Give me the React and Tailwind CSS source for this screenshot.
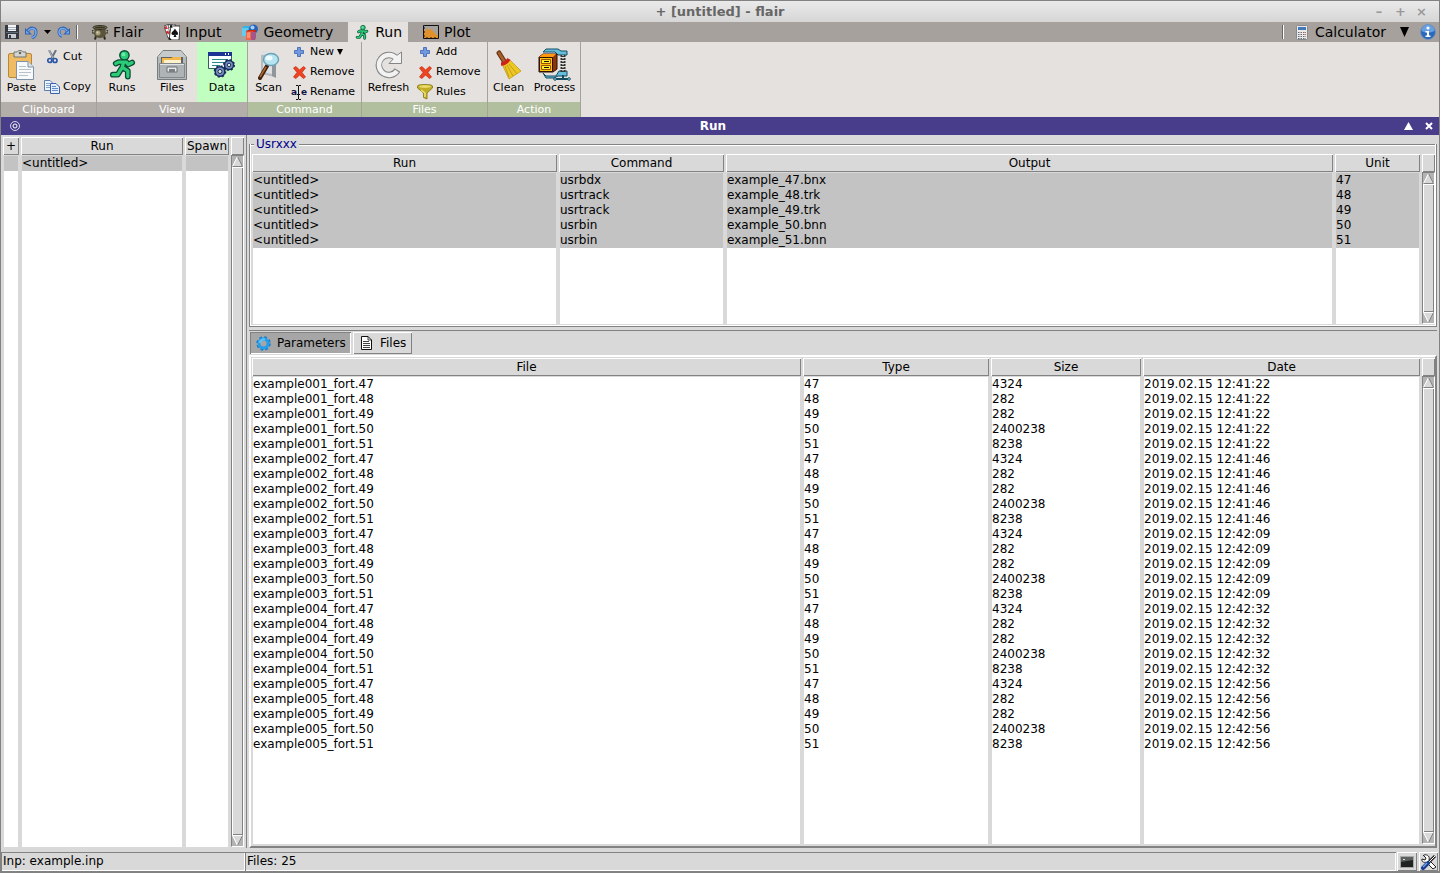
import clsx from 'clsx'

const RUNS = ['<untitled>']

const OUTPUTS = [
  ['<untitled>', 'usrbdx', 'example_47.bnx', '47'],
  ['<untitled>', 'usrtrack', 'example_48.trk', '48'],
  ['<untitled>', 'usrtrack', 'example_49.trk', '49'],
  ['<untitled>', 'usrbin', 'example_50.bnn', '50'],
  ['<untitled>', 'usrbin', 'example_51.bnn', '51'],
]

const CYCLES = ['12:41:22', '12:41:46', '12:42:09', '12:42:32', '12:42:56']
const UNITS = [['47', '4324'], ['48', '282'], ['49', '282'], ['50', '2400238'], ['51', '8238']]
const FILES = CYCLES.flatMap((time, i) =>
  UNITS.map(([unit, size]) => [`example00${i + 1}_fort.${unit}`, unit, size, `2019.02.15 ${time}`])
)

const RAISED = 'shadow-[inset_1px_1px_0_#fff,inset_-1px_-1px_0_#828282]'
const SUNKEN = 'shadow-[inset_1px_1px_0_#828282,inset_-1px_-1px_0_#fff]'

/* ---------- icons ---------- */

function Svg({ w, h, children }) {
  return (
    <svg width={w} height={h} viewBox={`0 0 ${w} ${h}`} fill="none" className="block shrink-0" aria-hidden="true">
      {children}
    </svg>
  )
}

const SaveIcon = () => (
  <Svg w={14} h={14}>
    <path d="M0 0H14V14H0Z" fill="#343b43" />
    <path d="M3 0H11V6H3Z" fill="#f2f4f6" />
    <path d="M3 2.500H11M3 4.500H11" stroke="#a9b2ba" />
    <path d="M1 7H13V8H1Z" fill="#5e6a75" />
    <path d="M3 9H11V13H3Z" fill="#c9ced2" />
    <path d="M4 10H6V13H4Z" fill="#343b43" />
  </Svg>
)

const UndoIcon = () => (
  <Svg w={13} h={14}>
    <path d="M3 6C5 2 11 2 11 7C11 10 9 12 7 13" stroke="#2f62b5" strokeWidth="3" />
    <path d="M0 3V9.500H7Z" fill="#2f62b5" />
    <path d="M3 6C5 2.500 10.500 2.500 11 7C11 10 9 12 7 12.500" stroke="#78a8ec" strokeWidth="1.500" />
    <path d="M1 5.500V8.600H4.500Z" fill="#78a8ec" />
  </Svg>
)

const RedoIcon = () => (
  <Svg w={13} h={14}>
    <path d="M10 6C8 2 2 2 2 7C2 10 4 11 5 11" stroke="#2f62b5" strokeWidth="3" />
    <path d="M13 3V9.500H6Z" fill="#2f62b5" />
    <path d="M10 6C8 2.500 2.500 2.500 2 7C2 9.500 3.500 10.500 5 11" stroke="#78a8ec" strokeWidth="1.500" />
    <path d="M12 5.500V8.600H8.500Z" fill="#78a8ec" />
  </Svg>
)

const CauldronIcon = () => (
  <Svg w={16} h={15}>
    <path d="M4 11L3 14.500M12 11L13 14.500" stroke="#29261b" strokeWidth="2" />
    <path d="M2 3H14L13.500 6C15 9 13.500 13 8 13C2.500 13 1 9 2.500 6Z" fill="#5a543b" />
    <path d="M1.500 5.500H0V8H2M14.500 5.500H16V8H14" stroke="#35311f" />
    <ellipse cx="8" cy="2.500" rx="7" ry="2" fill="#7a745a" stroke="#35311f" />
    <ellipse cx="8" cy="2.500" rx="5" ry=".9" fill="#3a3626" />
    <ellipse cx="6" cy="8" rx="2.500" ry="2.500" fill="#a39c7a" />
    <circle cx="5.500" cy="7.500" r="1" fill="#d8d2b4" />
  </Svg>
)

const CardsIcon = () => (
  <Svg w={16} h={16}>
    <path d="M0 2L5 0L8 13L4 14Z" fill="#fff" stroke="#222" strokeWidth=".7" />
    <path d="M4 1L11 0L12 14L7 15Z" fill="#fff" stroke="#222" strokeWidth=".7" />
    <path d="M7 2H16L15 16H5Z" fill="#fff" stroke="#111" strokeWidth=".8" />
    <path d="M1 5L2 2L3.500 5M2 8L4 7L5 10L3 9Z" stroke="#e01818" fill="#e01818" strokeWidth=".7" />
    <path d="M6 4L7 1L8 4" stroke="#111" />
    <path d="M11 4.500C12 7 14.500 8 14 10C13.500 11.500 12 11 11.500 10.500L12.500 13H9.500L10.500 10.500C9.500 11.500 7.500 11 7.500 9.500C7.500 7.500 10 7 11 4.500Z" fill="#111" />
    <path d="M5 14L7 16" stroke="#111" strokeWidth="1.500" />
  </Svg>
)

const GeometryIcon = () => (
  <Svg w={16} h={16}>
    <path d="M0 4L2 2H9V10L7 12H0Z" fill="#33b4e4" />
    <path d="M0 4H6V12H0Z" fill="#62cbf0" />
    <circle cx="11.500" cy="5" r="4.500" fill="#2862b8" />
    <circle cx="10.500" cy="3.600" r="2" fill="#a6cdf7" />
    <path d="M4 7L6 6H14L13 16H4Z" fill="#c82817" />
    <path d="M4 7.500H11.500V16H4Z" fill="#f26648" />
    <path d="M9 8H14V14L12 16H9Z" fill="#a35687" />
    <path d="M5 9L8 8V14H5Z" fill="#ff9171" />
  </Svg>
)

function RunnerIcon({ w, h }) {
  const body = 'M7 14L10 12.500H18L20 15L24 13M15 13L13.500 19M14 18L19.500 21.500L19.500 27.500M13 19L9 25.500H4'
  return (
    <svg width={w} height={h} viewBox="0 0 28 31" fill="none" className="block shrink-0" aria-hidden="true">
      <path d={body} stroke="#0a4b33" strokeWidth="6" strokeLinecap="round" strokeLinejoin="round" />
      <circle cx="16" cy="5.500" r="4.800" fill="#2bcb78" stroke="#0a4b33" strokeWidth="1.500" />
      <path d={body} stroke="#2bcb78" strokeWidth="3.400" strokeLinecap="round" strokeLinejoin="round" />
      <circle cx="15" cy="4.500" r="2" fill="#6be9a6" />
    </svg>
  )
}

const PlotIcon = () => (
  <Svg w={16} h={14}>
    <path d="M.5 .5H15.500V13.500H.5Z" stroke="#111" />
    <path d="M1 6L3 5L4 3L6 5L8 4L10 6L12 8L13 10H15V13H1Z" fill="#e0912c" />
    <path d="M0 3H2M0 7H2M0 11H2M4 12V14M8 12V14M12 12V14" stroke="#111" />
  </Svg>
)

const CalculatorIcon = () => (
  <Svg w={12} h={15}>
    <rect x=".5" y=".5" width="11" height="14" rx="1" fill="#eceae8" stroke="#85898d" />
    <path d="M2 2H10V5H2Z" fill="#4379b9" />
    <path d="M2 7.500H10M2 9.500H10M2 11.500H10M2 13.500H10" stroke="#666d77" strokeDasharray="1.500 1" />
    <path d="M9 7.500H10M9 9.500H10" stroke="#dd6230" />
  </Svg>
)

const InfoIcon = () => (
  <Svg w={16} h={16}>
    <circle cx="8" cy="8" r="7.500" fill="#2968bd" stroke="#7892b8" />
    <path d="M1.500 7A6.500 6.500 0 0 1 14.500 7C10 9 6 9 1.500 7Z" fill="#689fe0" />
    <circle cx="8" cy="4" r="1.600" fill="#fff" />
    <path d="M5.500 7H9V11.500H10.500V13H5.500V11.500H7V8.500H5.500Z" fill="#fff" />
  </Svg>
)

const PasteIcon = () => (
  <Svg w={27} h={30}>
    <rect x=".5" y="3.500" width="23" height="24" rx="1.500" fill="#efbc63" stroke="#b5893c" />
    <path d="M6 2H9C10 0 14 0 15 2H18V7H6Z" fill="#d4d6d2" stroke="#73766f" />
    <circle cx="12" cy="3" r="1.300" fill="#666" />
    <path d="M8.500 11.500H20L25.500 17V29.500H8.500Z" fill="#f7f9fb" stroke="#8092a8" />
    <path d="M20 11.500V17H25.500" fill="#dbe3eb" stroke="#8092a8" />
    <path d="M11 16.500H18M11 19.500H23M11 22.500H23M11 25.500H20" stroke="#b8c0c8" />
  </Svg>
)

const CutIcon = () => (
  <Svg w={11} h={14}>
    <path d="M2 0L6.500 8.500M9 0L4.500 8.500" stroke="#68747e" strokeWidth="2" />
    <path d="M2 0L6 8" stroke="#c4ccd3" strokeWidth=".8" />
    <circle cx="2.800" cy="10.500" r="2" stroke="#2d58a7" strokeWidth="1.700" />
    <circle cx="8" cy="10.500" r="2" stroke="#2d58a7" strokeWidth="1.700" />
  </Svg>
)

const CopyIcon = () => (
  <Svg w={16} h={14}>
    <path d="M.5 .5H6L9 3.500V10.500H.5Z" fill="#f0f5fc" stroke="#5d7eb3" />
    <path d="M2 3.500H6M2 5.500H7M2 7.500H7" stroke="#84a3d1" />
    <path d="M6.500 3.500H12L15.500 7V13.500H6.500Z" fill="#e4eefb" stroke="#3c63a5" />
    <path d="M8 6.500H12M8 8.500H14M8 10.500H14" stroke="#638bc8" />
  </Svg>
)

const CabinetIcon = () => (
  <Svg w={30} h={31}>
    <path d="M.5 8L6 1.500H24L29.500 8V30.500H.5Z" fill="#b4b9ba" stroke="#777c7e" />
    <path d="M1 8L6 2H24L29 8Z" fill="#c6cacb" />
    <path d="M4 8H26V15H4Z" fill="#5f6567" />
    <path d="M5 9H14L16 8H24V14H5Z" fill="#f4b84d" />
    <path d="M7 11H24V14H7Z" fill="#fff2cd" />
    <path d="M2.500 14.500H27.500V28.500H2.500Z" fill="#aeb4b5" stroke="#828789" />
    <path d="M3 15.500H27" stroke="#dfe2e2" />
    <path d="M10 18H20V23H10Z" fill="#e8ebeb" stroke="#6d7274" />
    <path d="M12 20H18V23H12Z" fill="#7a8082" />
  </Svg>
)

const DataIcon = () => (
  <Svg w={28} h={28}>
    <path d="M.5 1.500H23.500V17.500H.5Z" fill="#f9ffff" stroke="#345d5e" />
    <path d="M0 1H24V5H0Z" fill="#1b3392" />
    <path d="M17 3H18M20 3H21" stroke="#fff" strokeWidth="2" />
    <path d="M4 8.500H20M4 11.500H18M4 14.500H12" stroke="#28898a" />
    <circle cx="21" cy="14" r="4.500" fill="#7991be" stroke="#182c5e" strokeWidth="1.500" />
    <circle cx="21" cy="14" r="5.300" stroke="#182c5e" strokeWidth="1.500" strokeDasharray="2 2.160" />
    <circle cx="21" cy="14" r="1.800" fill="#dce9dc" stroke="#182c5e" />
    <circle cx="12" cy="20.500" r="4.800" fill="#7991be" stroke="#182c5e" strokeWidth="1.500" />
    <circle cx="12" cy="20.500" r="5.600" stroke="#182c5e" strokeWidth="1.500" strokeDasharray="2 2.400" />
    <circle cx="12" cy="20.500" r="2" fill="#dce9dc" stroke="#182c5e" />
  </Svg>
)

const ScanIcon = () => (
  <Svg w={22} h={30}>
    <path d="M3 1L17 3V27L3 24Z" fill="#b5bbc0" />
    <path d="M3 1L16 2V4L3 5ZM5 7H14V24L5 22Z" fill="#dde1e2" />
    <path d="M14 6H18V28L14 26Z" fill="#8f979c" />
    <path d="M9 16L2 28" stroke="#43210f" strokeWidth="4" strokeLinecap="round" />
    <path d="M8 17L2 27" stroke="#a96a34" strokeWidth="1.500" />
    <ellipse cx="13" cy="9.500" rx="7.500" ry="6" fill="#b8e4f2" stroke="#6aa3b8" strokeWidth="1.500" />
    <ellipse cx="11" cy="8" rx="3.500" ry="2.500" fill="#eefcff" />
  </Svg>
)

const PlusIcon = () => (
  <Svg w={10} h={10}>
    <path d="M3.500 .5H6.500V3.500H9.500V6.500H6.500V9.500H3.500V6.500H.5V3.500H3.500Z" fill="#7199df" stroke="#4f74ba" />
  </Svg>
)

const CrossIcon = () => (
  <Svg w={13} h={13}>
    <path d="M.5 2L3 .5L6.500 4L10.500 .5L12.500 2L9 6.500L12.500 11L10.500 12.500L6.500 9L3 12.500L.5 11L4 6.500Z" fill="#ed4422" stroke="#c6280c" strokeWidth=".7" />
  </Svg>
)

const RenameIcon = () => (
  <span className="relative flex h-[15px] w-4 shrink-0 items-center justify-between text-[9px] leading-none font-bold text-[#111144]">
    <span>a</span>
    <span>e</span>
    <svg width="5" height="15" viewBox="0 0 5 15" className="absolute top-0 left-[5px]" fill="none" aria-hidden="true">
      <path d="M2.500 1V14" stroke="#e5e1de" strokeWidth="3" />
      <path d="M0 .5H2L2.500 1L3 .5H5M2.500 1V14M0 14.500H2L2.500 14L3 14.500H5M1 9.500H4" stroke="#111" />
    </svg>
  </span>
)

const RefreshIcon = () => (
  <Svg w={28} h={28}>
    <path d="M21 7A10 10 0 1 0 22.500 19" stroke="#858585" strokeWidth="6.500" />
    <path d="M14 12.500H26.500V1L21 5Z" fill="#f2f2f2" stroke="#858585" />
    <path d="M21.500 7.500A10 10 0 1 0 22 20" stroke="#f2f2f2" strokeWidth="4.500" />
  </Svg>
)

const FunnelIcon = () => (
  <Svg w={16} h={16}>
    <path d="M.5 2C.5 0 15.500 0 15.500 2V4L10 9V15L6.500 13.500V9L.5 4Z" fill="#c1ae22" stroke="#827410" strokeWidth=".8" />
    <ellipse cx="8" cy="2.500" rx="6" ry="1.400" fill="#e8da6a" />
    <path d="M4 6L8 9V13" stroke="#f1e478" strokeWidth="1.500" />
  </Svg>
)

const BroomIcon = () => (
  <Svg w={26} h={30}>
    <path d="M3 3L8 11" stroke="#6b3515" strokeWidth="5" strokeLinecap="round" />
    <path d="M3 3L8 11" stroke="#a9602a" strokeWidth="2.500" strokeLinecap="round" />
    <path d="M6 14L14 10L25 21L13 29Z" fill="#edc823" stroke="#c49a18" strokeWidth=".8" />
    <path d="M9 16L13 27M11 15L17 26M13 14L21 24" stroke="#c49e1e" />
    <path d="M5 14C8 14 11 12 13 9" stroke="#cf211b" strokeWidth="3.500" />
  </Svg>
)

const ProcessIcon = () => (
  <Svg w={33} h={33}>
    <path d="M5 4L8 1H20L23 3H29V7H20L17 4Z" fill="#65bedb" stroke="#124d63" />
    <path d="M5 25L8 28H18L21 23H29V28H20L16 30H8Z" fill="#65bedb" stroke="#124d63" />
    <path d="M25 7V24" stroke="#333" strokeWidth="5" strokeDasharray="2 1" />
    <path d="M25 7V24" stroke="#999" strokeWidth="2" strokeDasharray="1 2" />
    <path d="M25 27V31M17 31H32" stroke="#124d63" strokeWidth="2" />
    <circle cx="17" cy="31" r="1.300" fill="#b7ecf8" stroke="#124d63" />
    <circle cx="31" cy="31" r="1.300" fill="#b7ecf8" stroke="#124d63" />
    <path d="M1 9L5 6H19V21L15 24H1Z" fill="#8c3508" stroke="#301100" />
    <path d="M1 9L5 6H18L15 9Z" fill="#ff970f" />
    <path d="M1.500 9.500H14.500V23.500H1.500Z" fill="#ffc40f" stroke="#301100" />
    <path d="M3.500 11.500H12.500V15.500H3.500ZM3.500 17.500H12.500V21.500H3.500Z" fill="#fff028" stroke="#9b5108" />
    <path d="M6 13.500H11M6 19.500H11" stroke="#111" />
  </Svg>
)

const GearIcon = () => (
  <Svg w={15} h={15}>
    <circle cx="7.500" cy="7.500" r="6" stroke="#187ed0" strokeWidth="2.500" strokeDasharray="2.700 2" />
    <circle cx="7.500" cy="7.500" r="4.500" stroke="#259de8" strokeWidth="3" />
    <path d="M3.500 7A4.500 4.500 0 0 1 9 3.500" stroke="#5fc4fa" strokeWidth="2" />
  </Svg>
)

const PageIcon = () => (
  <Svg w={11} h={14}>
    <path d="M.5 .5H7L10.500 4V13.500H.5Z" fill="#fff" stroke="#111" />
    <path d="M7 .5V4H10.500M2 5.500H8M2 7.500H9M2 9.500H9M2 11.500H9" stroke="#111" strokeWidth=".8" />
  </Svg>
)

const TerminalIcon = () => (
  <Svg w={14} h={12}>
    <path d="M.5 .5H13.500V11.500H.5Z" fill="#202322" stroke="#a6aaa6" />
    <path d="M1 1H13V4L1 6Z" fill="#5b605d" />
    <path d="M3 3.500H5" stroke="#ddd" />
  </Svg>
)

const ToolsIcon = () => (
  <Svg w={16} h={16}>
    <path d="M2 1L5 4L4 6L1 5C0 8 4 9 5 8L12 15L15 13L8 6C9 3 7 0 3 1" fill="#fff" stroke="#222" />
    <path d="M14 2L7 9" stroke="#222" strokeWidth="3" />
    <path d="M14 2L7 9" stroke="#fff" />
    <path d="M7 9L2 14" stroke="#183d8b" strokeWidth="4" strokeLinecap="round" />
    <path d="M6 9L2 13" stroke="#77a7ee" strokeWidth="1.300" />
  </Svg>
)

const Caret = ({ w, h, up }) => (
  <Svg w={w} h={h}>
    <path d={up ? `M0 ${h}H${w}L${w / 2} 0Z` : `M0 0H${w}L${w / 2} ${h}Z`} fill="currentColor" />
  </Svg>
)

/* ---------- ribbon ---------- */

function Tab({ icon, label, active }) {
  return (
    <button className={clsx('flex h-5 items-center gap-[5px] px-1.5 text-[14px]', active && 'bg-[#e5e1de]')}>
      <span className="flex w-4 justify-center">{icon}</span>
      {label}
    </button>
  )
}

function Group({ title, green, className, children }) {
  return (
    <section className={clsx('flex flex-col border-r border-[#a6a19c]', className)}>
      <div className="flex h-[60px]">{children}</div>
      <h2 className={clsx('h-[15px] text-center leading-[15px] text-white', green ? 'bg-[#b1bf9f]' : 'bg-[#b3aeaa]')}>
        {title}
      </h2>
    </section>
  )
}

function BigButton({ icon, label, className }) {
  return (
    <button className={clsx('flex h-full flex-col items-center pt-1.5', className)}>
      <span className="flex h-[33px] items-center">{icon}</span>
      <span className="leading-[13px]">{label}</span>
    </button>
  )
}

function SmallButton({ icon, label, caret }) {
  return (
    <button className="flex flex-1 items-center gap-[3px]">
      <span className="flex w-4 shrink-0 justify-center">{icon}</span>
      {label}
      {caret && <Caret w={6} h={6} />}
    </button>
  )
}

/* ---------- lists ---------- */

function Scrollbar() {
  return (
    <div className="flex w-[13px] shrink-0 flex-col">
      <div className={clsx('h-[18px]', RAISED)} />
      <div className="flex min-h-0 flex-1 flex-col border border-r-white border-b-white border-l-[#828282] border-t-[#828282] bg-[#b3b3b3]">
        <button aria-label="Scroll up">
          <Svg w={11} h={11}>
            <path d="M0 11L5.500 0L11 11Z" fill="#d9d9d9" />
            <path d="M.5 10.500L5.500 .5" stroke="#fff" />
            <path d="M5.500 .5L10.500 10.500H.5" stroke="#828282" />
          </Svg>
        </button>
        <div className={clsx('flex-1 bg-[#d9d9d9]', RAISED)} />
        <button aria-label="Scroll down">
          <Svg w={11} h={11}>
            <path d="M0 0H11L5.500 11Z" fill="#d9d9d9" />
            <path d="M5.500 10.500L.5 .5H10.500" stroke="#fff" />
            <path d="M10.500 .5L5.500 10.500" stroke="#828282" />
          </Svg>
        </button>
      </div>
    </div>
  )
}

function ListTable({ label, columns, rows, selected }) {
  const cell = 'h-[15px] truncate border-l border-r-[3px] border-[#d9d9d9] p-0 leading-[15px]'
  return (
    <div className="flex min-h-0 flex-1">
      <table aria-label={label} className="h-full min-w-0 flex-1 table-fixed border-separate border-spacing-0">
        <colgroup>
          {columns.map((c) => <col key={c.name} className={c.width} />)}
        </colgroup>
        <thead>
          <tr>
            {columns.map((c) => (
              <th key={c.name} className={clsx('h-[19px] border-r-2 border-b border-[#d9d9d9] p-0 text-center leading-4 font-normal', RAISED)}>
                {c.name}
              </th>
            ))}
          </tr>
        </thead>
        <tbody>
          {rows.map((row, i) => (
            <tr key={i}>
              {row.map((value, j) => (
                <td key={j} className={clsx(cell, selected ? 'bg-[#c3c3c3]' : 'bg-white')}>{value}</td>
              ))}
            </tr>
          ))}
          {/* empty area under the last row */}
          <tr>
            {columns.map((c) => (
              <td key={c.name} className="border-l border-r-[3px] border-[#d9d9d9] bg-white p-0" />
            ))}
          </tr>
        </tbody>
      </table>
      <Scrollbar />
    </div>
  )
}

const RUN_COLS = [
  { name: '+', width: 'w-[18px]' },
  { name: 'Run', width: 'w-auto' },
  { name: 'Spawn', width: 'w-[46px]' },
]
const OUTPUT_COLS = [
  { name: 'Run', width: 'w-[307px]' },
  { name: 'Command', width: 'w-[167px]' },
  { name: 'Output', width: 'w-auto' },
  { name: 'Unit', width: 'w-[87px]' },
]
const FILE_COLS = [
  { name: 'File', width: 'w-auto' },
  { name: 'Type', width: 'w-[188px]' },
  { name: 'Size', width: 'w-[152px]' },
  { name: 'Date', width: 'w-[279px]' },
]

export default function App() {
  return (
    <div className="flex h-screen flex-col overflow-hidden border-x border-t border-b-2 border-[#828282] bg-[#d9d9d9] font-['DejaVu_Sans',sans-serif] text-[12px] leading-4 text-black">
      {/* Window title */}
      <header className="flex h-[21px] shrink-0 items-center bg-linear-to-b from-[#eaeaea] to-[#d6d6d6] text-[13px] font-bold">
        <span className="w-[65px]" />
        <h1 className="flex-1 text-center text-[#666]">+ [untitled] - flair</h1>
        <div className="flex w-[65px] gap-[11px] text-[#999]">
          <button aria-label="Minimize" className="w-2.5">–</button>
          <button aria-label="Maximize" className="w-2.5">+</button>
          <button aria-label="Close" className="w-2.5">×</button>
        </div>
      </header>

      {/* Tabs */}
      <nav className="flex h-5 shrink-0 items-center bg-[#a6a19c]">
        <div className="flex w-[85px] items-center pl-1">
          <button aria-label="Save"><SaveIcon /></button>
          <button aria-label="Undo" className="ml-1.5"><UndoIcon /></button>
          <button aria-label="Undo list" className="ml-1.5"><Caret w={7} h={4} /></button>
          <button aria-label="Redo" className="ml-1.5"><RedoIcon /></button>
          <span className="ml-1.5 h-3.5 w-0.5 border-l border-[#666] bg-white" />
        </div>
        <div className="flex flex-1 gap-[9px]">
          <Tab icon={<CauldronIcon />} label="Flair" />
          <Tab icon={<CardsIcon />} label="Input" />
          <Tab icon={<GeometryIcon />} label="Geometry" />
          <Tab icon={<RunnerIcon w={14} h={15} />} label="Run" active />
          <Tab icon={<PlotIcon />} label="Plot" />
        </div>
        <div className="flex items-center pr-[3px]">
          <span className="mr-3 h-3.5 w-0.5 border-l border-[#666] bg-white" />
          <button className="flex items-center gap-[7px] text-[14px]">
            <CalculatorIcon />
            Calculator
          </button>
          <button aria-label="More tools" className="ml-3.5"><Caret w={9} h={10} /></button>
          <button aria-label="About" className="ml-[11px]"><InfoIcon /></button>
        </div>
      </nav>

      {/* Ribbon */}
      <div className="flex h-[75px] shrink-0 bg-[#e5e1de] text-[11px]">
        <Group title="Clipboard" className="w-24">
          <BigButton icon={<PasteIcon />} label="Paste" className="w-[41px]" />
          <div className="flex flex-col pl-0.5">
            <SmallButton icon={<CutIcon />} label="Cut" />
            <SmallButton icon={<CopyIcon />} label="Copy" />
          </div>
        </Group>
        <Group title="View" className="w-[151px]">
          <BigButton icon={<RunnerIcon w={27} h={30} />} label="Runs" className="w-[50px]" />
          <BigButton icon={<CabinetIcon />} label="Files" className="w-[50px]" />
          <BigButton icon={<DataIcon />} label="Data" className="w-[50px] bg-[#c1ffc1]" />
        </Group>
        <Group title="Command" green className="w-[114px]">
          <BigButton icon={<ScanIcon />} label="Scan" className="w-[41px]" />
          <div className="flex flex-col pl-0.5">
            <SmallButton icon={<PlusIcon />} label="New" caret />
            <SmallButton icon={<CrossIcon />} label="Remove" />
            <SmallButton icon={<RenameIcon />} label="Rename" />
          </div>
        </Group>
        <Group title="Files" green className="w-[126px]">
          <BigButton icon={<RefreshIcon />} label="Refresh" className="w-[53px]" />
          <div className="flex flex-col pl-0.5">
            <SmallButton icon={<PlusIcon />} label="Add" />
            <SmallButton icon={<CrossIcon />} label="Remove" />
            <SmallButton icon={<FunnelIcon />} label="Rules" />
          </div>
        </Group>
        <Group title="Action" green className="w-[93px]">
          <BigButton icon={<BroomIcon />} label="Clean" className="w-[41px]" />
          <BigButton icon={<ProcessIcon />} label="Process" className="w-[51px]" />
        </Group>
      </div>

      {/* Panel title */}
      <div className="flex h-[18px] shrink-0 items-center bg-[#483d8b] font-bold text-white">
        <button aria-label="Pin panel" className="flex w-[42px] pl-[9px]">
          <Svg w={10} h={10}>
            <circle cx="5" cy="5" r="4.500" stroke="#fff" strokeWidth=".8" />
            <circle cx="5" cy="5" r="2" stroke="#fff" />
          </Svg>
        </button>
        <h2 className="flex-1 text-center">Run</h2>
        <div className="flex w-14 items-center justify-end gap-3 pr-1.5">
          <button aria-label="Expand panel"><Caret w={9} h={8} up /></button>
          <button aria-label="Close panel">
            <Svg w={8} h={8}><path d="M1 1L7 7M7 1L1 7" stroke="#fff" strokeWidth="2" /></Svg>
          </button>
        </div>
      </div>

      <main className="flex min-h-0 flex-1">
        {/* Runs */}
        <aside className="flex w-[246px] shrink-0 border-r border-[#828282] pt-0.5 pr-0.5 pb-px pl-0.5">
          <ListTable label="Runs" columns={RUN_COLS} rows={RUNS.map((r) => ['', r, ''])} selected />
        </aside>

        <div className="flex min-w-0 flex-1 flex-col pr-0.5 pl-0.5">
          <section aria-labelledby="usrxxx" className="mt-px flex h-[191px] shrink-0 flex-col">
            <div className="flex h-2 items-start">
              <span className="mt-2 h-0.5 w-[5px] border-t border-[#828282] bg-white" />
              <h3 id="usrxxx" className="px-0.5 text-[#00008b]">Usrxxx</h3>
              <span className="mt-2 h-0.5 flex-1 border-t border-[#828282] bg-white" />
            </div>
            <div className="flex min-h-0 flex-1 border-r border-b border-l border-[#828282]">
              <div className="flex min-h-0 flex-1 border-r border-b border-l border-white pt-2.5 pb-px pl-px">
                <ListTable label="Usrxxx" columns={OUTPUT_COLS} rows={OUTPUTS} selected />
              </div>
            </div>
          </section>
          <div className="mt-0.5 h-0.5 shrink-0 border-b border-[#828282]" />

          <div role="tablist" className="mt-px flex h-[23px] shrink-0 items-start gap-0.5 pl-px">
            <button role="tab" aria-selected="true" className={clsx('flex h-[22px] w-[101px] items-center gap-1.5 bg-[#a6a6a6] pl-1.5', SUNKEN)}>
              <GearIcon />
              Parameters
            </button>
            <button role="tab" aria-selected="false" className={clsx('flex h-[22px] w-[59px] items-center gap-2 pl-2', RAISED)}>
              <PageIcon />
              Files
            </button>
          </div>

          <div className="flex min-h-0 flex-1 border-2 border-t-white border-r-[#828282] border-b-[#828282] border-l-white pt-px pb-0.5 pl-px">
            <ListTable label="Files" columns={FILE_COLS} rows={FILES} />
          </div>
        </div>
      </main>

      {/* Status bar */}
      <footer className="mt-1 flex h-[19px] shrink-0">
        <p className={clsx('w-[244px] pl-0.5 leading-[18px]', SUNKEN)}>Inp: example.inp</p>
        <p className={clsx('flex-1 pl-0.5 leading-[18px]', SUNKEN)}>Files: 25</p>
        <button aria-label="Terminal" className={clsx('ml-px flex w-5 items-center justify-center', RAISED)}>
          <TerminalIcon />
        </button>
        <button aria-label="Settings" className={clsx('mr-px ml-0.5 flex w-[19px] items-center justify-center', RAISED)}>
          <ToolsIcon />
        </button>
      </footer>
    </div>
  )
}
